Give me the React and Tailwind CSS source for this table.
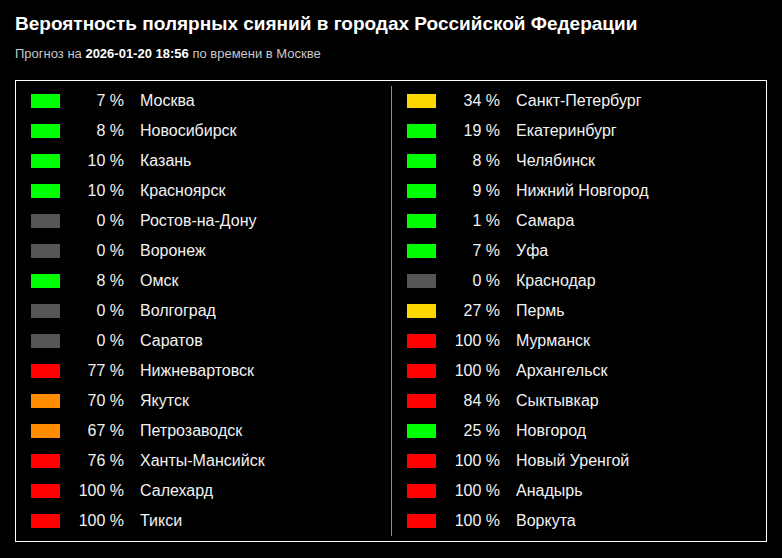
const GREEN = 'bg-[#00ff00]';
const YELLOW = 'bg-[#ffd700]';
const RED = 'bg-[#ff0000]';
const ORANGE = 'bg-[#ff8c00]';
const GREY = 'bg-[#555555]';

const left = [
  [GREEN, 7, 'Москва'],
  [GREEN, 8, 'Новосибирск'],
  [GREEN, 10, 'Казань'],
  [GREEN, 10, 'Красноярск'],
  [GREY, 0, 'Ростов-на-Дону'],
  [GREY, 0, 'Воронеж'],
  [GREEN, 8, 'Омск'],
  [GREY, 0, 'Волгоград'],
  [GREY, 0, 'Саратов'],
  [RED, 77, 'Нижневартовск'],
  [ORANGE, 70, 'Якутск'],
  [ORANGE, 67, 'Петрозаводск'],
  [RED, 76, 'Ханты-Мансийск'],
  [RED, 100, 'Салехард'],
  [RED, 100, 'Тикси'],
];

const right = [
  [YELLOW, 34, 'Санкт-Петербург'],
  [GREEN, 19, 'Екатеринбург'],
  [GREEN, 8, 'Челябинск'],
  [GREEN, 9, 'Нижний Новгород'],
  [GREEN, 1, 'Самара'],
  [GREEN, 7, 'Уфа'],
  [GREY, 0, 'Краснодар'],
  [YELLOW, 27, 'Пермь'],
  [RED, 100, 'Мурманск'],
  [RED, 100, 'Архангельск'],
  [RED, 84, 'Сыктывкар'],
  [GREEN, 25, 'Новгород'],
  [RED, 100, 'Новый Уренгой'],
  [RED, 100, 'Анадырь'],
  [RED, 100, 'Воркута'],
];

const CityRow = ({ color, value, name }) => (
  <div className="flex items-center h-[30px]">
    <span className={`w-[29px] h-[14px] shrink-0 ${color}`} />
    <span className="w-[64px] text-right">{value} %</span>
    <span className="ml-4">{name}</span>
  </div>
);

export default function App() {
  return (
    <div className="min-h-screen w-full bg-black text-[#f2f2f2] font-['Liberation_Sans',Arial,sans-serif] px-[15px] pt-[11px] pb-4">
      <h1 className="text-[19px] font-bold leading-[26px] text-white">Вероятность полярных сияний в городах Российской Федерации</h1>
      <p className="text-[13px] leading-[16px] text-[#c8c8c8] mt-[9px]">
        Прогноз на <b className="text-white">2026-01-20 18:56</b> по времени в Москве
      </p>
      <div className="mt-[18px] border border-white grid grid-cols-2 py-[5px] text-[16px]">
        <div className="pl-[15px]">
          {left.map(([c, v, n]) => <CityRow key={n} color={c} value={v} name={n} />)}
        </div>
        <div className="pl-[15px] border-l border-[#8a8a8a]">
          {right.map(([c, v, n]) => <CityRow key={n} color={c} value={v} name={n} />)}
        </div>
      </div>
    </div>
  );
}
